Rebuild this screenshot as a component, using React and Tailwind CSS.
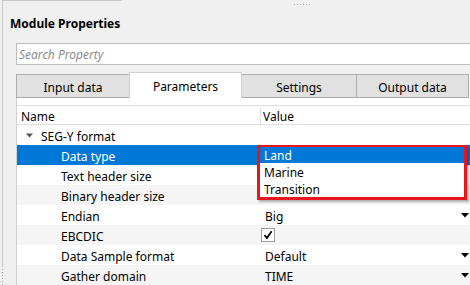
import React from "react";

const font = { fontFamily: '"Segoe UI", "Noto Sans", "Liberation Sans", sans-serif' };

function Arrow() {
  return (
    <svg width="8" height="5" viewBox="0 0 8 5" className="shrink-0">
      <path d="M0 0 H8 L4 4.5 Z" fill="#000" />
    </svg>
  );
}

const rows = [
  { name: "SEG-Y format", group: true },
  { name: "Data type", selected: true },
  { name: "Text header size" },
  { name: "Binary header size" },
  { name: "Endian", value: "Big", arrow: true },
  { name: "EBCDIC", check: true },
  { name: "Data Sample format", value: "Default", arrow: true },
  { name: "Gather domain", value: "TIME", arrow: true },
];

export default function App() {
  return (
    <div
      className="relative w-[470px] h-[285px] overflow-hidden bg-[#f0f0f0] text-[12px] text-black"
      style={font}
    >
      <div className="flex h-full">
        {/* left splitter edge */}
        <div className="w-[3px] shrink-0 flex flex-col">
          <div className="flex-1 border-r border-[#c8c8c8]" />
          <div className="h-[18px] flex flex-col items-end gap-[2px] pt-[2px]">
            <div className="w-[1px] h-[1px] bg-[#a0a0a0]" />
            <div className="w-[1px] h-[1px] bg-[#a0a0a0]" />
            <div className="w-[1px] h-[1px] bg-[#a0a0a0]" />
            <div className="w-[1px] h-[1px] bg-[#a0a0a0]" />
            <div className="w-[1px] h-[1px] bg-[#a0a0a0]" />
            <div className="w-[1px] h-[1px] bg-[#a0a0a0]" />
          </div>
        </div>
        <div className="flex-1 flex flex-col min-w-0">
          {/* top strip */}
          <div className="h-[1px] w-[119px] bg-[#c8c8c8]" />
          <div className="flex justify-center pl-[130px] pt-[3px] gap-[2px]">
            <div className="w-[1px] h-[1px] bg-[#b0b0b0]" />
            <div className="w-[1px] h-[1px] bg-[#b0b0b0]" />
            <div className="w-[1px] h-[1px] bg-[#b0b0b0]" />
            <div className="w-[1px] h-[1px] bg-[#b0b0b0]" />
            <div className="w-[1px] h-[1px] bg-[#b0b0b0]" />
            <div className="w-[1px] h-[1px] bg-[#b0b0b0]" />
          </div>
          <div className="pl-[7px] pt-[11px] leading-[16px] font-bold text-[12px]">
            Module Properties
          </div>
          {/* search */}
          <div className="ml-[13px] mt-[11px] h-[22px] bg-white border border-r-0 border-[#bdbdbd] flex items-center pl-[2px] pt-[2px]">
            <span className="italic text-[#8c8c8c]">Search Property</span>
          </div>
          {/* tabs */}
          <div className="ml-[13px] mt-[7px] flex items-end h-[26px]">
            <div className="w-[113px] h-[24px] bg-[#e1e1e1] border border-[#adadad] border-r-0 flex items-center justify-center pt-[3px]">
              Input data
            </div>
            <div className="w-[113px] h-[26px] bg-white border border-b-0 border-[#d0d0d0] flex items-start pt-[5px] justify-center">
              Parameters
            </div>
            <div className="w-[115px] h-[24px] bg-[#e1e1e1] border border-l-0 border-[#adadad] flex items-center justify-center pt-[3px]">
              Settings
            </div>
            <div className="w-[112px] h-[24px] bg-[#e1e1e1] border border-l-0 border-[#adadad] flex items-center justify-center pt-[3px]">
              Output data
            </div>
          </div>
          {/* pane */}
          <div className="ml-[13px] flex-1 bg-white border-l border-[#d0d0d0] pt-[7px] flex flex-col">
            <div className="flex h-[20px] border-t border-b border-[#e0e0e0] leading-[18px] pt-[2px]">
              <div className="w-[243px] pl-[4px]">Name</div>
              <div className="flex-1 border-l border-[#e0e0e0] pl-[2px]">Value</div>
            </div>
            {rows.map((r, i) => (
              <div
                key={r.name}
                className={
                  "flex h-[20px] items-center pt-[3px] " +
                  (r.selected
                    ? "bg-[#0078d7] text-white"
                    : i % 2 === 1
                    ? "bg-[#f5f5f5]"
                    : "bg-white")
                }
              >
                <div className="w-[243px] flex items-center">
                  {r.group ? (
                    <>
                      <svg width="7" height="5" viewBox="0 0 7 5" className="ml-[9px] mr-[8px] -mt-[2px]">
                        <path d="M0 0.5 H7 L3.5 4.5 Z" fill="#555" />
                      </svg>
                      <span>{r.name}</span>
                    </>
                  ) : (
                    <span className="pl-[44px]">{r.name}</span>
                  )}
                </div>
                <div className="flex-1 flex items-center pl-[5px] pr-[1px]">
                  {r.check ? (
                    <div className="w-[14px] h-[14px] -ml-[4px] -mt-[3px] border border-[#a0a0a0] bg-white flex items-center justify-center">
                      <svg width="10" height="10" viewBox="0 0 10 10">
                        <path d="M1.5 5.2 L4 8 L8.6 1.2" stroke="#000" strokeWidth="1.8" fill="none" />
                      </svg>
                    </div>
                  ) : (
                    <span className="flex-1">{r.value}</span>
                  )}
                  {r.arrow && (
                    <span className="-mt-[3px] flex">
                      <Arrow />
                    </span>
                  )}
                </div>
              </div>
            ))}
          </div>
        </div>
      </div>

      {/* dropdown popup */}
      <div className="absolute left-[257px] top-[145px] w-[210px] h-[55px] border-[3px] border-t-2 border-[#e8141e] bg-white shadow-[2px_2px_2px_rgba(0,0,0,0.3)] flex flex-col">
        <div className="h-[16px] bg-[#0078d7] text-white pl-[4px] leading-[16px] pt-[1px]">Land</div>
        <div className="h-[17px] pl-[4px] leading-[17px] pt-[1px]">Marine</div>
        <div className="h-[17px] pl-[4px] leading-[17px] pt-[1px]">Transition</div>
      </div>
    </div>
  );
}
